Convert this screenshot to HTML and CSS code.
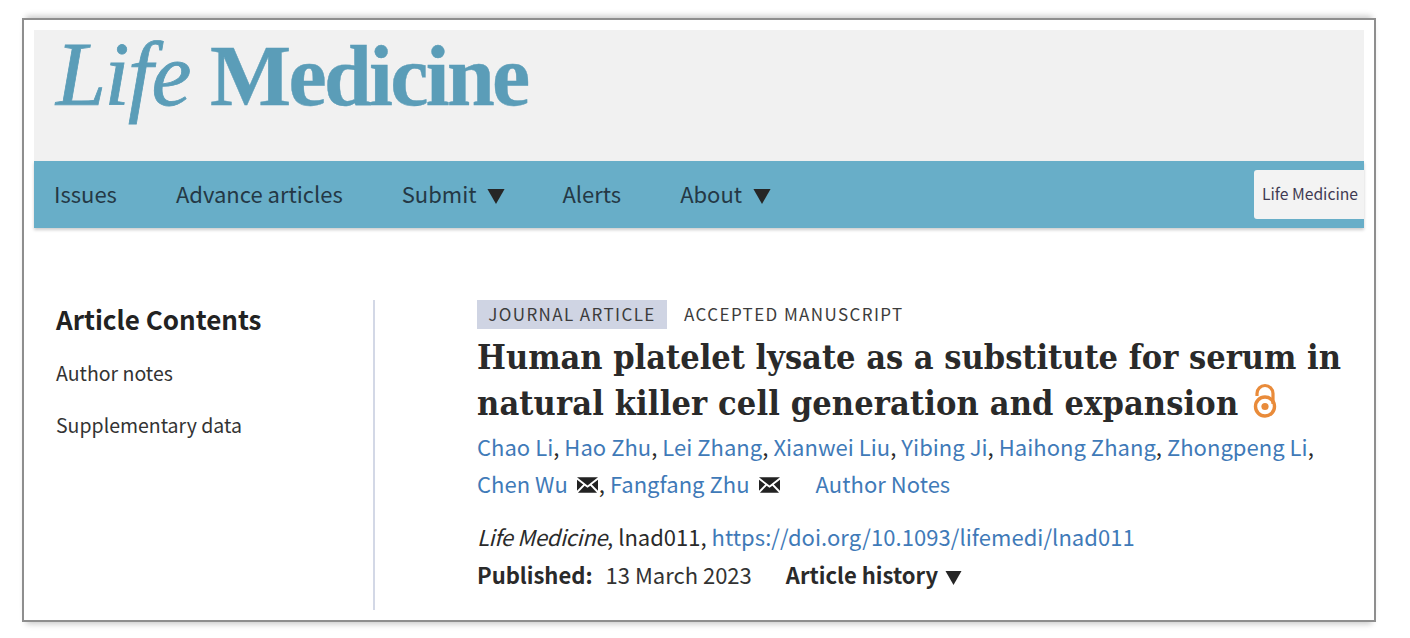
FILE: index.html
```html
<!DOCTYPE html>
<html lang="en">
<head>
<meta charset="utf-8">
<title>Life Medicine</title>
<link rel="stylesheet" href="styles.css">
</head>
<body>
<div class="frame">
  <header class="masthead">
    <div class="logo"><em>Life</em> <span>Medicine</span></div>
  </header>
  <nav class="nav">
    <a>Issues</a>
    <a>Advance articles</a>
    <a>Submit <svg class="tri" viewBox="0 0 16 14"><path d="M0 0H16L8 14Z"/></svg></a>
    <a>Alerts</a>
    <a>About <svg class="tri" viewBox="0 0 16 14"><path d="M0 0H16L8 14Z"/></svg></a>
    <div class="search">Life Medicine</div>
  </nav>
  <div class="content">
    <aside class="side">
      <h2>Article Contents</h2>
      <p>Author notes</p>
      <p>Supplementary data</p>
    </aside>
    <main class="article">
      <div class="labels"><span class="type">JOURNAL ARTICLE</span><span class="status">ACCEPTED MANUSCRIPT</span></div>
      <h1>Human platelet lysate as a substitute for serum in<br><span class="second">natural killer cell generation and expansion</span> <svg class="oa" viewBox="0 0 24 36"><path d="M4 13V10.500A8 8 0 0 1 20 10.500V21" fill="none" stroke="#e98b3a" stroke-width="3.200"/><circle cx="12" cy="23.500" r="9.500" fill="none" stroke="#e98b3a" stroke-width="3.400"/><circle cx="12" cy="23.500" r="3.600" fill="#e98b3a"/></svg></h1>
      <div class="authors">
        <div class="line"><a>Chao Li</a>, <a>Hao Zhu</a>, <a>Lei Zhang</a>, <a>Xianwei Liu</a>, <a>Yibing Ji</a>, <a>Haihong Zhang</a>, <a>Zhongpeng Li</a>,</div>
        <div class="line"><a>Chen Wu</a> <svg class="mail" viewBox="0 0 22 16"><path d="M0 0H22L11 8.500ZM0 2.500V14L6.500 7.500ZM22 2.500V14L15.500 7.500ZM8 8.800L11 11L14 8.800L21 16H1Z"/></svg>, <a>Fangfang Zhu</a> <svg class="mail" viewBox="0 0 22 16"><path d="M0 0H22L11 8.500ZM0 2.500V14L6.500 7.500ZM22 2.500V14L15.500 7.500ZM8 8.800L11 11L14 8.800L21 16H1Z"/></svg><a class="notes">Author Notes</a></div>
      </div>
      <div class="cite"><em>Life Medicine</em>, lnad011, <a>https://doi.org/10.1093/lifemedi/lnad011</a></div>
      <div class="pub"><b>Published:</b><span class="date">13 March 2023</span><b class="hist">Article history <svg class="tri small" viewBox="0 0 16 14"><path d="M0 0H16L8 14Z"/></svg></b></div>
    </main>
  </div>
</div>
</body>
</html>
```
FILE: styles.css
```css
* { box-sizing: border-box; }
html, body { margin: 0; background: #fff; }
body {
  width: 1410px;
  height: 638px;
  overflow: hidden;
  padding: 18px 0 0 22px;
  font-family: "Noto Sans CJK SC", "Noto Sans", sans-serif;
  color: #2a2a2a;
}
.frame {
  width: 1354px;
  height: 604px;
  border: 2px solid #8e8e8e;
  padding: 10px;
  background: #fff;
  box-shadow: 0 -6px 6px -4px rgba(0,0,0,.22), 0 6px 6px -4px rgba(0,0,0,.22);
}
.masthead {
  height: 131px;
  background: #f1f1f1;
  padding: 0 0 0 22px;
}
.logo {
  font-family: "Liberation Serif", serif;
  font-size: 90px;
  line-height: 90px;
  color: #5b9db8;
  letter-spacing: -1.500px;
  white-space: nowrap;
  -webkit-text-stroke: .8px #5b9db8;
}
.logo span { font-size: 86px; font-weight: 700; letter-spacing: -2.700px; margin-left: -1px; -webkit-text-stroke: .4px #5b9db8; }
.nav {
  height: 67px;
  background: #68aec8;
  display: flex;
  align-items: center;
  gap: 59px;
  padding: 0 0 4px 20px;
  font-size: 22px;
  box-shadow: 0 2px 3px rgba(0,0,0,.2);
}
.nav a { white-space: nowrap; color: #243845; }
.tri { width: 18px; height: 15px; fill: #262626; margin: 0 -2px 0 6px; vertical-align: -1px; }
.search {
  margin: 4px 0 0 auto;
  width: 110px;
  height: 49px;
  background: #f3f3f3;
  border-radius: 3px 0 0 3px;
  display: flex;
  align-items: center;
  padding: 0 0 3px 8px;
  font-size: 15.700px;
  color: #3f3a52;
  white-space: nowrap;
}
.content {
  display: flex;
  padding-top: 72px;
}
.side {
  width: 341px;
  height: 310px;
  border-right: 2px solid #d3d8e6;
  padding: 0 0 0 22px;
}
.side h2 {
  margin: 0 0 10px;
  font-size: 26px;
  line-height: 37px;
  font-weight: 700;
  color: #222;
}
.side p {
  margin: 0;
  font-size: 19.500px;
  line-height: 52px;
  color: #333;
}
.article {
  padding-left: 102px;
  flex: 1;
  min-width: 0;
}
.labels { display: flex; align-items: center; height: 29px; }
.type {
  background: #cfd4e3;
  height: 29px;
  width: 190px;
  display: flex;
  align-items: center;
  justify-content: center;
  font-size: 17px;
  letter-spacing: 1.400px;
  line-height: 25px;
  padding-bottom: 3px;
  color: #3c3c3c;
}
.status {
  margin-left: 17px;
  font-size: 17px;
  letter-spacing: 1.400px;
  line-height: 25px;
  padding-bottom: 3px;
  color: #3c3c3c;
}
h1 {
  margin: 5px 0 0;
  font-family: "DejaVu Serif Condensed", "DejaVu Serif", serif;
  font-size: 34px;
  line-height: 46px;
  font-weight: 700;
  color: #2a2a2a;
  white-space: nowrap;
}
.second { letter-spacing: .14px; }
.oa { width: 24px; height: 36px; vertical-align: -4px; margin-left: 4px; }
.authors { font-size: 22px; margin-top: 2px; letter-spacing: .03px; }
.line { height: 37px; line-height: 37px; white-space: nowrap; }
a { color: #3f7ab8; }
.mail { width: 21px; height: 16px; fill: #222; margin: 0 1px 0 4px; vertical-align: 0; }
.notes { margin-left: 35px; }
.cite { font-size: 22px; line-height: 38px; margin-top: 15px; white-space: nowrap; }
.cite em { letter-spacing: -.35px; }
.cite a { letter-spacing: .05px; }
.pub { font-size: 22px; line-height: 38px; white-space: nowrap; display: flex; align-items: center; }
.date { margin-left: 13px; color: #333; }
.hist { margin-left: 34px; }
.tri.small { width: 17px; height: 14px; margin: 0 0 0 2px; vertical-align: -1px; }
```
